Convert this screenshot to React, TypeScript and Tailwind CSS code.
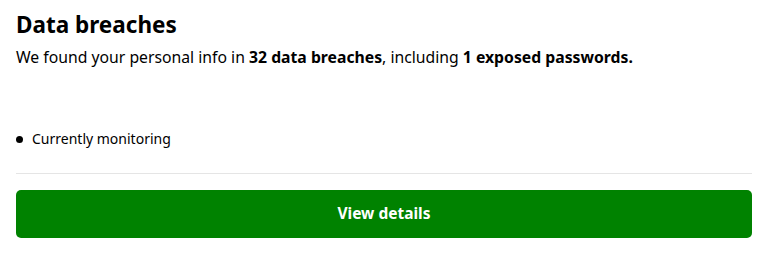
export default function App() {
  return (
    <div className="w-[764px] h-[258px] bg-white px-4 pt-[10px] text-black" style={{ fontFamily: '"Noto Sans", "Open Sans", sans-serif' }}>
      <h2 className="text-[22.5px] leading-[30px] font-bold">Data breaches</h2>
      <p className="mt-[6px] text-[15.75px] leading-[22px]">
        We found your personal info in <span className="font-bold">32 data breaches</span>, including{" "}
        <span className="font-bold">1 exposed passwords.</span>
      </p>
      <div className="mt-[61px] flex items-center gap-[9px] text-[14px] leading-[20px]">
        <span className="w-[7px] h-[7px] rounded-full bg-black"></span>
        <span>Currently monitoring</span>
      </div>
      <div className="mt-[24px] h-px w-[736px] bg-[#e5e5e5]"></div>
      <button className="mt-4 w-[736px] h-12 rounded-[5px] bg-[#008200] text-white text-[15.5px] font-bold">View details</button>
    </div>
  );
}
